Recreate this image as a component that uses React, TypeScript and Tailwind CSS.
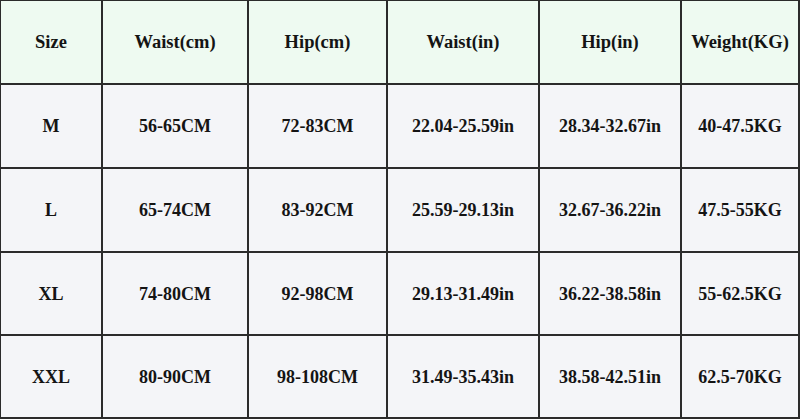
const headers = ["Size", "Waist(cm)", "Hip(cm)", "Waist(in)", "Hip(in)", "Weight(KG)"]

const rows = [
  ["M", "56-65CM", "72-83CM", "22.04-25.59in", "28.34-32.67in", "40-47.5KG"],
  ["L", "65-74CM", "83-92CM", "25.59-29.13in", "32.67-36.22in", "47.5-55KG"],
  ["XL", "74-80CM", "92-98CM", "29.13-31.49in", "36.22-38.58in", "55-62.5KG"],
  ["XXL", "80-90CM", "98-108CM", "31.49-35.43in", "38.58-42.51in", "62.5-70KG"],
]

export default function App() {
  return (
    <div className="w-[800px] h-[419px] bg-white">
      <div
        className="grid w-[800px] h-[419px] grid-cols-[100px_144px_137px_150px_140px_1fr] grid-rows-[82px_82px_82px_81px_1fr] gap-[2px] border-[1px] border-r-2 border-b-2 border-[#2b2b2b] bg-[#2b2b2b] text-[#141414]"
        style={{ fontFamily: '"Liberation Serif", "Times New Roman", serif' }}
      >
        {headers.map((h) => (
          <div key={h} className="flex items-center justify-center pt-[2px] bg-[#eefaf1] text-[18.5px] font-bold">
            {h}
          </div>
        ))}
        {rows.map((row) =>
          row.map((cell, i) => (
            <div key={row[0] + i} className="flex items-center justify-center pt-[1px] bg-[#f4f5f8] text-[18px] font-bold">
              {cell}
            </div>
          ))
        )}
      </div>
    </div>
  )
}
